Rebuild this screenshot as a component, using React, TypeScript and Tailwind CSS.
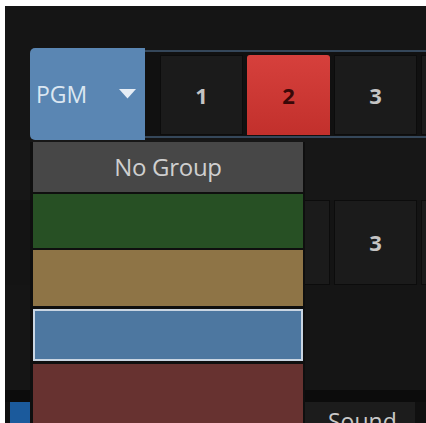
import React from "react";

const font = { fontFamily: '"Open Sans", "Noto Sans", sans-serif' };

function DarkBtn({ label, h }: { label?: string; h: string }) {
  return (
    <div
      className={`w-[83px] ${h} shrink-0 bg-[#1b1b1b] border border-[#0c0c0c] flex items-center justify-center text-[22px] font-bold text-[#c4c4c4]`}
    >
      {label}
    </div>
  );
}

export default function App() {
  return (
    <div className="w-[426px] h-[423px] bg-white pt-[6px] pl-[5px] overflow-hidden" style={font}>
      <div className="relative w-[421px] h-[417px] bg-[#151515] flex flex-col overflow-hidden">
        <div className="h-[42px] shrink-0" />
        {/* Row 1 */}
        <div className="h-[92px] shrink-0 flex">
          <div className="w-[25px] shrink-0" />
          <div className="w-[115px] shrink-0 bg-[#5a86b3] rounded-l-[5px] flex items-center pl-[6px] pr-[9px] justify-between">
            <span className="text-[23px] text-[#dbe6f1]">PGM</span>
            <svg width="17" height="10" viewBox="0 0 17 10">
              <polygon points="0,0 17,0 8.5,9.5" fill="#e6edf5" />
            </svg>
          </div>
          <div className="flex-1 mt-[2px] h-[88px] border-t-2 border-b-2 border-[#35475a] bg-[#111111] flex gap-[4px] pl-[15px] pt-[3px]">
            <DarkBtn label="1" h="h-[80px]" />
            <div className="w-[83px] h-[80px] shrink-0 rounded-t-[3px] bg-gradient-to-b from-[#d6403c] to-[#c2302c] flex items-center justify-center text-[22px] font-bold text-[#3a0808]">
              2
            </div>
            <DarkBtn label="3" h="h-[80px]" />
            <DarkBtn h="h-[80px]" />
          </div>
        </div>
        {/* gap area */}
        <div className="h-[60px] shrink-0 bg-[#171717]" />
        {/* Row 2 */}
        <div className="h-[85px] shrink-0 flex gap-[4px] pl-[155px] bg-[#141414]">
          <DarkBtn label="1" h="h-[85px]" />
          <DarkBtn label="2" h="h-[85px]" />
          <DarkBtn label="3" h="h-[85px]" />
          <DarkBtn h="h-[85px]" />
        </div>
        <div className="h-[105px] shrink-0 bg-[#151515]" />
        <div className="h-[12px] shrink-0 bg-[#0c0c0c]" />
        {/* bottom bar */}
        <div className="flex-1 flex bg-[#101010]">
          <div className="w-[5px] shrink-0" />
          <div className="w-[20px] shrink-0 bg-[#1b5a9c]" />
          <div className="w-[275px] shrink-0" />
          <div className="w-[110px] shrink-0 bg-[#1c1c1c] pl-[23px] pt-[8px] text-[23px] leading-none text-[#c8c8c8]">
            Sound
          </div>
        </div>

        {/* Dropdown menu */}
        <div className="absolute left-[25px] top-[136px] w-[275px] bottom-0 bg-[#0f0f0f] pl-[3px] pr-[2px] flex flex-col">
          <div className="h-[50px] shrink-0 bg-[#474747] flex items-center justify-center text-[24px] text-[#cfcfcf] tracking-[-0.3px]">
            No Group
          </div>
          <div className="h-[2px] shrink-0" />
          <div className="h-[54px] shrink-0 bg-[#275024]" />
          <div className="h-[2px] shrink-0" />
          <div className="h-[56px] shrink-0 bg-[#8e7446]" />
          <div className="h-[3px] shrink-0" />
          <div className="h-[52px] shrink-0 bg-[#4d77a0] border-2 border-[#c9d5e2]" />
          <div className="h-[3px] shrink-0" />
          <div className="flex-1 bg-[#673230]" />
        </div>
      </div>
    </div>
  );
}
